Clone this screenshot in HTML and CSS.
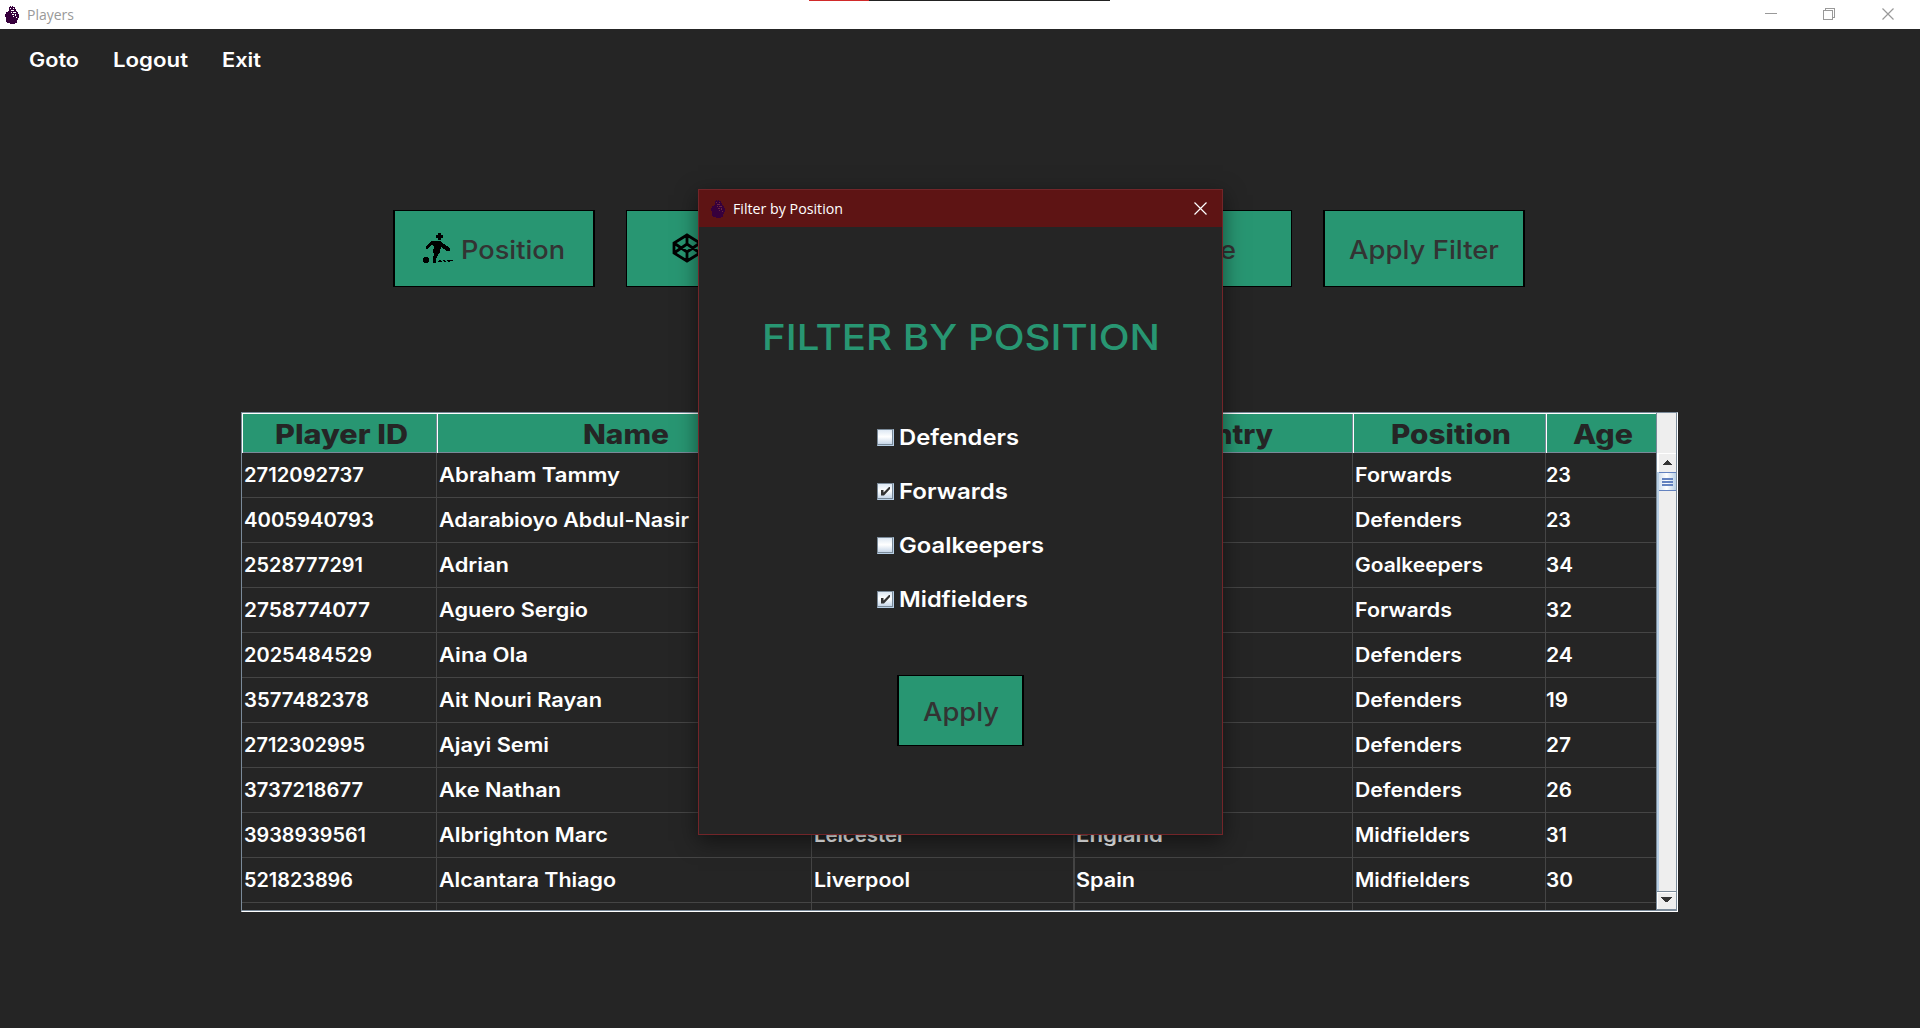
FILE: index.html
```html
<!DOCTYPE html>
<html lang="en">
<head>
<meta charset="utf-8">
<title>Players</title>
<link rel="stylesheet" href="styles.css">
</head>
<body>
<svg width="0" height="0" class="defs" aria-hidden="true">
  <symbol id="lion" viewBox="0 0 14 18">
    <path fill="#37003c" d="M4 1h1V0h1v1h1V0h1v1h2v2h1v2h1v1h1v2h1v4h-1v2h-1v3h-2v1H5v-1H2v-1H1v-5H0V8h1V6h2V5h1z"/>
    <path fill="var(--face)" d="M5 2h1v1H5zM8 2h1v1H8zM6 4h3v1H6zM6 6h1v1H6zM8 6h3v1H8zM7 8h2v1H7zM10 8h1v2h-1zM8 10h1v1H8zM11 11h1v1h-1z"/>
  </symbol>
</svg>
<header class="titlebar">
  <svg class="lion" width="14" height="18"><use href="#lion"/></svg>
  <span class="caption fit" data-w="45">Players</span>
  <svg class="controls" width="134" height="14" fill="none" stroke="#999" shape-rendering="crispEdges">
    <path d="M0 6.500h12M58.500 3.500h9v9h-9zM60.500 3.500v-2h9v9h-2"/><path shape-rendering="auto" stroke-width="1.200" d="M117.500 1.500l11 11m0-11l-11 11"/>
  </svg>
  <i class="strip"></i>
</header>
<nav class="menu">
  <a><span class="fit" data-w="48">Goto</span></a><a><span class="fit" data-w="73">Logout</span></a><a><span class="fit" data-w="37">Exit</span></a>
</nav>
<main>
  <section class="filters">
    <button class="btn"><svg width="30" height="30" viewBox="0 0 30 30" shape-rendering="crispEdges"><path d="M15 0h3v2h2v3h-2v2h-3V5h-2V2h2zM8 8h9l4 3 3 2 3 3v2h-3l-3-2-3-2-1 5-2 3-2 4v4h-3v-5l1-4-1-2 1-6-3-1-3 4H3v-2l3-4zM1 24h4v1h1v4H5v1H1v-1H0v-4h1zM15 28l2-1 2 1 2-1 2 1 2-1h5v1h-2l-2 1-2-1-2 1-2-1-2 1h-3z"/></svg><span class="fit" data-w="102">Position</span></button>
    <button class="btn club"><svg width="30" height="30" viewBox="0 0 30 30" fill="none" stroke="#000" stroke-width="2.800"><path d="M15 2l13 8v10l-13 8-13-8V10zM15 2v9m0 8v9M2 10l13 9 13-9M2 20l13-9 13 9"/></svg><span class="fit" data-w="56">Club</span></button>
    <button class="btn"><span class="fit" data-w="106">Country</span></button>
    <button class="btn age"><span class="fit" data-w="50">Age</span></button>
    <button class="btn"><span class="fit" data-w="148">Apply Filter</span></button>
  </section>
  <section class="pane">
    <div class="view">
      <div class="row head"><b><span class="fit" data-w="131">Player ID</span></b><b><span class="fit" data-w="84">Name</span></b><b><span class="fit" data-w="60">Club</span></b><b><span class="fit" data-w="113">Country</span></b><b><span class="fit" data-w="118">Position</span></b><b><span class="fit" data-w="58">Age</span></b></div>
      <div class="row"><span class="fit" data-w="118">2712092737</span><span class="fit" data-w="179">Abraham Tammy</span><span></span><span></span><span class="fit" data-w="95">Forwards</span><span class="fit" data-w="23">23</span></div>
      <div class="row"><span class="fit" data-w="128">4005940793</span><span class="fit" data-w="248">Adarabioyo Abdul-Nasir</span><span></span><span></span><span class="fit" data-w="105">Defenders</span><span class="fit" data-w="23">23</span></div>
      <div class="row"><span class="fit" data-w="117">2528777291</span><span class="fit" data-w="68">Adrian</span><span></span><span></span><span class="fit" data-w="126">Goalkeepers</span><span class="fit" data-w="25">34</span></div>
      <div class="row"><span class="fit" data-w="124">2758774077</span><span class="fit" data-w="147">Aguero Sergio</span><span></span><span></span><span class="fit" data-w="95">Forwards</span><span class="fit" data-w="24">32</span></div>
      <div class="row"><span class="fit" data-w="126">2025484529</span><span class="fit" data-w="87">Aina Ola</span><span></span><span></span><span class="fit" data-w="105">Defenders</span><span class="fit" data-w="25">24</span></div>
      <div class="row"><span class="fit" data-w="123">3577482378</span><span class="fit" data-w="161">Ait Nouri Rayan</span><span></span><span></span><span class="fit" data-w="105">Defenders</span><span class="fit" data-w="20">19</span></div>
      <div class="row"><span class="fit" data-w="119">2712302995</span><span class="fit" data-w="108">Ajayi Semi</span><span></span><span></span><span class="fit" data-w="105">Defenders</span><span class="fit" data-w="23">27</span></div>
      <div class="row"><span class="fit" data-w="117">3737218677</span><span class="fit" data-w="120">Ake Nathan</span><span></span><span></span><span class="fit" data-w="105">Defenders</span><span class="fit" data-w="24">26</span></div>
      <div class="row"><span class="fit" data-w="120">3938939561</span><span class="fit" data-w="167">Albrighton Marc</span><span class="fit" data-w="89">Leicester</span><span class="fit" data-w="85">England</span><span class="fit" data-w="113">Midfielders</span><span class="fit" data-w="19">31</span></div>
      <div class="row"><span class="fit" data-w="107">521823896</span><span class="fit" data-w="175">Alcantara Thiago</span><span class="fit" data-w="94">Liverpool</span><span class="fit" data-w="57">Spain</span><span class="fit" data-w="113">Midfielders</span><span class="fit" data-w="25">30</span></div>
      <div class="row last"><span></span><span></span><span></span><span></span><span></span><span></span></div>
    </div>
    <div class="scroll">
      <div class="corner"></div>
      <div class="arrow"><svg width="9" height="5" shape-rendering="crispEdges"><path fill="#333" d="M4 0h1v1h1v1h1v1h1v1h1v1H0V4h1V3h1V2h1V1h1z"/></svg></div>
      <div class="track"><div class="thumb"><i></i><i></i><i></i></div></div>
      <div class="arrow down"><svg width="11" height="5" shape-rendering="crispEdges"><path fill="#333" d="M0 0h11v1h-1v1H9v1H8v1H7v1H4V4H3V3H2V2H1V1H0z"/></svg></div>
    </div>
  </section>
</main>
<section class="dialog">
  <div class="dialog-bar">
    <svg class="lion" width="14" height="18"><use href="#lion"/></svg>
    <span class="caption fit" data-w="108">Filter by Position</span>
    <svg class="close" width="13" height="13" stroke="#fff" stroke-width="1.200"><path d="M.5.5l12 12m0-12l-12 12"/></svg>
  </div>
  <h1><span class="fit" data-w="396">FILTER BY POSITION</span></h1>
  <div class="options">
    <label><i class="box"></i><span class="fit" data-w="118">Defenders</span></label>
    <label><i class="box on"><svg width="9" height="9"><path fill="#333" d="M0 3h2.500v2.500L8 0h1v2L3 8.500H0z"/></svg></i><span class="fit" data-w="107">Forwards</span></label>
    <label><i class="box"></i><span class="fit" data-w="143">Goalkeepers</span></label>
    <label><i class="box on"><svg width="9" height="9"><path fill="#333" d="M0 3h2.500v2.500L8 0h1v2L3 8.500H0z"/></svg></i><span class="fit" data-w="127">Midfielders</span></label>
  </div>
  <button class="btn apply"><span class="fit" data-w="74">Apply</span></button>
</section>
<script src="fit.js"></script>
</body>
</html>
```
FILE: styles.css
```css
* { box-sizing: border-box; }
body {
  margin: 0; width: 1920px; height: 1028px; overflow: hidden;
  background: #252525; color: #fff;
  font: 600 19.5px/24px Inter, "Liberation Sans", sans-serif;
}
.defs { position: absolute; }
.fit { display: inline-block; white-space: nowrap; text-align: left; transform-origin: 0 50%; }
.titlebar {
  --face: #fff;
  position: relative; display: flex; align-items: center;
  height: 29px; padding: 0 21px 0 5px; background: #fff; color: #999;
}
.caption { font: 400 15px/20px "Open Sans", "Noto Sans", sans-serif; margin: 0 0 2px 8px; }
.titlebar .controls { margin-left: auto; margin-bottom: 1px; }
.strip {
  position: absolute; left: 809px; top: 0; width: 301px; height: 1px;
  background: linear-gradient(90deg, #d12a2a 60px, #222 60px);
}
.menu { display: flex; gap: 34px; height: 63px; padding: 19px 0 0 29px; }
.filters { display: grid; grid-template-columns: repeat(5, 202px); justify-content: space-between; width: 1132px; margin: 118px 0 0 393px; }
.btn {
  display: flex; align-items: center; justify-content: center; gap: 8px;
  height: 77px; padding: 0; border: solid #000; border-width: 1px 2px;
  background: #289672; color: #333; font: 550 25.5px/32px Inter, "Liberation Sans", sans-serif;
}
.btn .fit { position: relative; top: 1px; }
.btn svg { flex: none; position: relative; top: -1px; }
.club { border-left-width: 1px; padding-right: 13px; }
.age { width: 201px; padding-left: 37px; border-right-width: 1px; }
.pane {
  display: flex; width: 1437px; height: 500px; margin: 125px 0 0 241px;
  border: 1px solid #7a8a99; border-right-color: #fff; border-bottom-color: #fff;
}
.view { width: 1414px; height: 498px; overflow: hidden; border-bottom: 1px solid #7a8a99; }
.row { display: grid; grid-template-columns: 195px 375px 262px 279px 193px 111px; height: 45px; position: relative; }
.row::after { content: ""; position: absolute; inset: 0; background:
  linear-gradient(#454545, #454545) 194px 0/1px 100% no-repeat,
  linear-gradient(#454545, #454545) 569px 0/1px 100% no-repeat,
  linear-gradient(#454545, #454545) 831px 0/2px 100% no-repeat,
  linear-gradient(#454545, #454545) 1110px 0/1px 100% no-repeat,
  linear-gradient(#454545, #454545) 1303px 0/1px 100% no-repeat,
  linear-gradient(#454545, #454545) 0 100%/100% 1px no-repeat; }
.row > span { line-height: 44px; margin-left: 1.5px; }
.row > span:nth-child(n+3) { margin-left: 2px; }
.row > span:nth-child(6) { margin-left: 0; }
.head { height: 40px; }
.head::after { content: none; }
.head b {
  display: flex; justify-content: center; align-items: center; padding-left: 2px;
  background: #289672; color: #252525; font-size: 27px; font-weight: 800;
  border: solid #fff; border-width: 1px 0 0 1px;
  box-shadow: inset -1px -1px #7a8a99;
}
.head .fit { position: relative; top: 1px; }
.scroll {
  display: flex; flex-direction: column; width: 21px; height: 498px;
  border: 1px solid #7a8a99; border-width: 0 1px 1px; background: #eee;
}
.corner { height: 40px; }
.arrow { display: flex; align-items: center; justify-content: center; height: 19px; padding-right: 1px; border: solid #fff; border-width: 1px 0 0 2px; }
.arrow svg { position: relative; top: -1px; }
.track { flex: 1; border-left: 2px solid #b8cfe5; }
.thumb {
  display: flex; flex-direction: column; align-items: center; justify-content: center; gap: 1px;
  height: 19px; border: 1px solid #6382bf; border-width: 1px 0;
  background: linear-gradient(90deg, #d5e2f0, #fff 45%, #b8cfe5);
}
.thumb i { width: 11px; height: 2px; background: #6382bf; }
.down { border: solid #7a8a99; border-width: 1px 0; box-shadow: inset 1px 1px #fff; }
.dialog {
  --face: #6b2740;
  position: absolute; left: 698px; top: 189px; width: 525px; height: 646px;
  display: flex; flex-direction: column; align-items: center;
  background: #252525; border: 1px solid #722529;
  box-shadow: 0 6px 20px rgba(0, 0, 0, .5);
}
.dialog-bar {
  display: flex; align-items: center; align-self: stretch; height: 37px;
  padding: 0 15px 0 12px; background: #5e1414;
}
.close { margin-left: auto; }
h1 { margin: 87px 0 0; color: #289672; font: 550 36px/46px Inter, "Liberation Sans", sans-serif; }
.options { align-self: stretch; margin: 50px 0 0 178px; font-size: 22px; }
.options label { display: flex; align-items: center; height: 54px; gap: 5px; }
.box {
  display: flex; align-items: center; justify-content: center; width: 17px; height: 17px;
  border: 1px solid #7a8a99; border-right-color: #b8cfe5; border-bottom-color: #b8cfe5;
  background: linear-gradient(#dde8f3, #fff 45%, #c0d2e6);
  box-shadow: inset -1px -1px #7a8a99;
}
.apply { width: 127px; height: 71px; margin-top: 49px; }
```
FILE: fit.js
```js
// Stretch each label horizontally to its design width (ink width plus side bearings).
document.fonts.ready.then(() => {
  document.querySelectorAll('.fit').forEach(el => {
    const range = document.createRange();
    range.selectNodeContents(el);
    const natural = range.getBoundingClientRect().width;
    const want = Number(el.dataset.w) + 2;
    el.style.width = want + 'px';
    el.style.transform = `scaleX(${want / natural})`;
  });
});
```
